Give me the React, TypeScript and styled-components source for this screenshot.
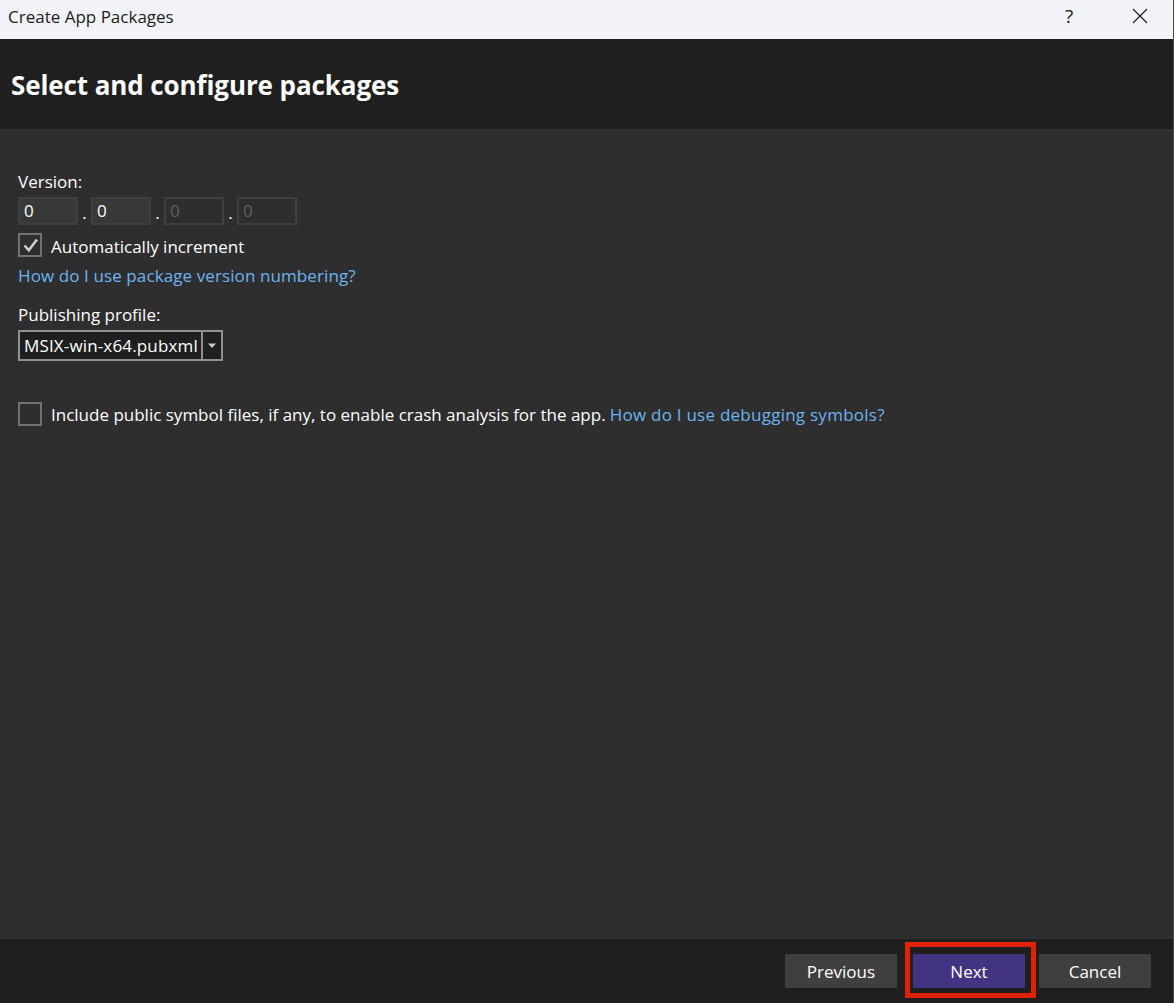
import React from "react";
import styled, { createGlobalStyle } from "styled-components";

const Global = createGlobalStyle`
  html, body { margin: 0; padding: 0; background: #2e2e2e; }
  *, *::before, *::after { box-sizing: border-box; }
  body { font-family: "Open Sans", "Noto Sans", sans-serif; }
`;
const Window = styled.div`
  width: 1174px; height: 1003px; display: flex; flex-direction: column; position: relative; overflow: hidden;
  background: #2e2e2e; color: #fff; font-size: 17px; border-right: 1px solid #474747;
`;
const TitleBar = styled.div`
  height: 39px; flex: none; background: #f2f3f8; color: #1c1c1c; display: flex; align-items: center; padding: 0 0 7px 8px; font-size: 17px;
`;
const TitleText = styled.span` flex: 1; `;
const TitleButton = styled.button<{ $gap: number }>`
  width: 46px; height: 32px; border: 0; background: none; padding: 0; display: flex; align-items: center; justify-content: center; color: #1c1c1c;
  font: inherit; font-size: 19px; margin-right: ${p => p.$gap}px;
`;
const Header = styled.header`
  height: 90px; flex: none; background: #1f1f1f; display: flex; align-items: center; padding: 2px 0 0 11px;
`;
const Heading = styled.h1` margin: 0; font-size: 26px; font-weight: 700; letter-spacing: -0.1px; color: #fff; `;
const Body = styled.main`
  flex: 1; padding: 41px 18px 0; display: flex; flex-direction: column;
`;
const Label = styled.div` height: 24px; line-height: 24px; `;
const VersionRow = styled.div` display: flex; align-items: flex-end; height: 28px; margin-top: 3px; `;
const VersionField = styled.div<{ $disabled?: boolean }>`
  width: 60px; height: 28px; border: 2px solid #3f3f3f; background: ${p => p.$disabled ? "#2e2e2e" : "#383838"};
  color: ${p => p.$disabled ? "#5f5f5f" : "#fff"}; padding-left: 4px; line-height: 24px;
`;
const Dot = styled.span` width: 13px; text-align: center; line-height: 24px; `;
const CheckRow = styled.div<{ $top: number }>` display: flex; align-items: center; height: 24px; margin-top: ${p => p.$top}px; white-space: nowrap; `;
const CheckBox = styled.div`
  width: 24px; height: 24px; border: 2px solid #727272; display: flex; align-items: center; justify-content: center; margin-right: 9px; flex: none;
`;
const CheckLabel = styled.span<{ $drop?: number }>` padding-top: ${p => p.$drop ?? 0}px; `;
const LinkText = styled.a<{ $left?: number; $track: number }>` color: #6cb3ef; margin-left: ${p => p.$left ?? 0}px; letter-spacing: ${p => p.$track}px; `;
const HelpLine = styled.div` height: 24px; line-height: 24px; margin-top: 7px; `;
const ProfileLabel = styled(Label)` margin-top: 15px; `;
const Combo = styled.div`
  width: 205px; height: 31px; margin-top: 3px; border: 2px solid #919191; background: #1f1f1f; display: flex;
`;
const ComboText = styled.div` width: 183px; padding-left: 4px; line-height: 27px; letter-spacing: 0.15px; white-space: nowrap; overflow: hidden; border-right: 2px solid #919191; `;
const ComboArrow = styled.div` flex: 1; display: flex; align-items: center; justify-content: center; `;
const Footer = styled.footer`
  height: 64px; flex: none; background: #1f1f1f; display: flex; align-items: flex-start; justify-content: flex-end; padding: 15px 22px 0 0;
`;
const Btn = styled.button<{ $primary?: boolean; $left: number }>`
  width: 112px; height: 34px; border: 0; padding: 0; margin-left: ${p => p.$left}px; background: ${p => p.$primary ? "#433482" : "#3f3f3f"}; color: #fff; font: inherit; font-size: 17px;
`;
const Callout = styled.div`
  position: absolute; left: 905px; top: 942px; width: 131px; height: 56px; border: 5px solid #e02200; pointer-events: none;
`;

export default function App() {
  return (
    <Window>
      <Global />
      <TitleBar>
        <TitleText>Create App Packages</TitleText>
        <TitleButton $gap={25}>?</TitleButton>
        <TitleButton $gap={10}>
          <svg width="16" height="16" viewBox="0 0 16 16"><path d="M1 1l14 14M15 1L1 15" stroke="#1c1c1c" strokeWidth="1.2" fill="none" /></svg>
        </TitleButton>
      </TitleBar>
      <Header><Heading>Select and configure packages</Heading></Header>
      <Body>
        <Label>Version:</Label>
        <VersionRow>
          <VersionField>0</VersionField><Dot>.</Dot>
          <VersionField>0</VersionField><Dot>.</Dot>
          <VersionField $disabled>0</VersionField><Dot>.</Dot>
          <VersionField $disabled>0</VersionField>
        </VersionRow>
        <CheckRow $top={8}>
          <CheckBox>
            <svg width="16" height="16" viewBox="0 0 16 16"><path d="M2.5 8.5l4.3 4.8L15 2.5" stroke="#cfcfcf" strokeWidth="2.6" fill="none" /></svg>
          </CheckBox>
          <CheckLabel $drop={3}>Automatically increment</CheckLabel>
        </CheckRow>
        <HelpLine><LinkText $track={0.1}>How do I use package version numbering?</LinkText></HelpLine>
        <ProfileLabel>Publishing profile:</ProfileLabel>
        <Combo>
          <ComboText>MSIX-win-x64.pubxml</ComboText>
          <ComboArrow><svg width="10" height="6" viewBox="0 0 10 6"><path d="M1 0.5h8L5 5z" fill="#c8c8c8" /></svg></ComboArrow>
        </Combo>
        <CheckRow $top={41}>
          <CheckBox />
          <CheckLabel>Include public symbol files, if any, to enable crash analysis for the app.</CheckLabel>
          <LinkText $left={4} $track={0.25}>How do I use debugging symbols?</LinkText>
        </CheckRow>
      </Body>
      <Footer>
        <Btn $left={0}>Previous</Btn>
        <Btn $left={16} $primary>Next</Btn>
        <Btn $left={14}>Cancel</Btn>
      </Footer>
      <Callout />
    </Window>
  );
}
